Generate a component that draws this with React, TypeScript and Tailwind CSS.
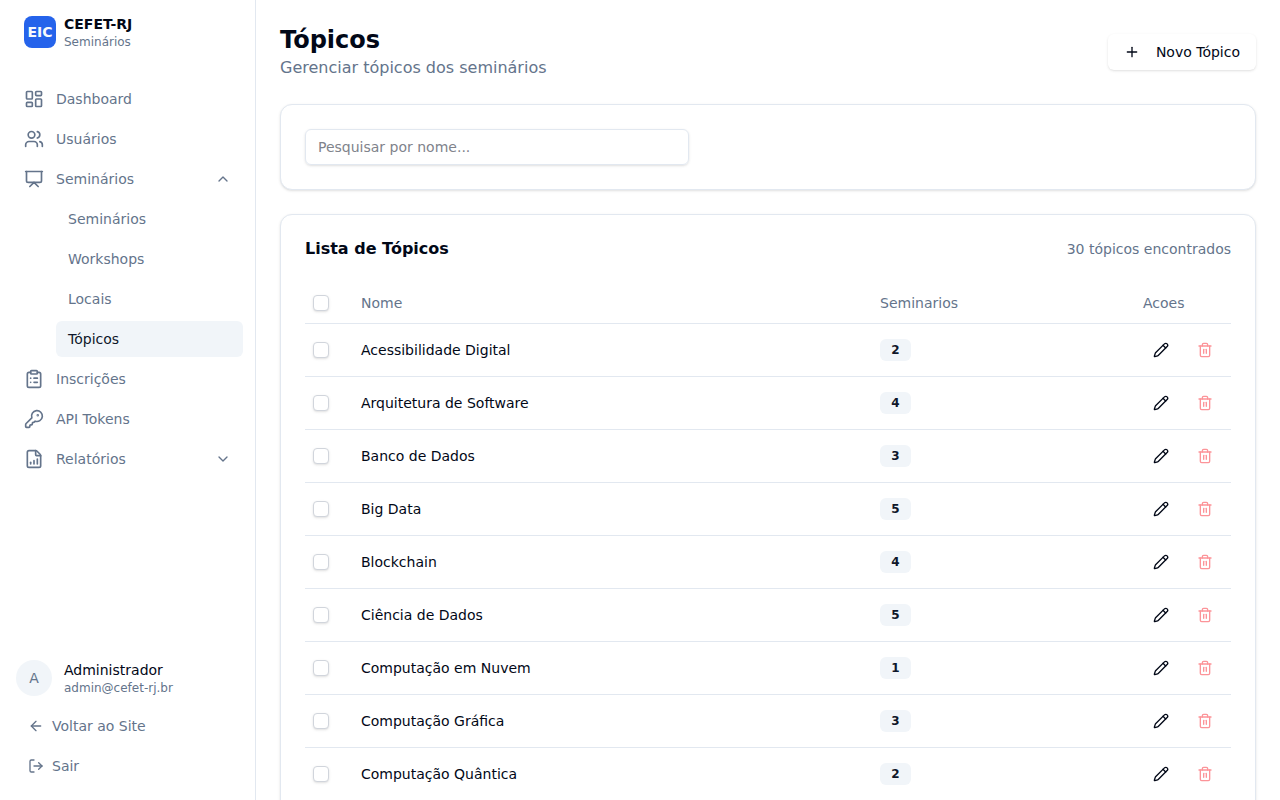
import {
  ArrowLeft,
  ChevronDown,
  ChevronUp,
  ClipboardList,
  FileChartColumnIncreasing,
  KeyRound,
  LayoutDashboard,
  LogOut,
  Pencil,
  Plus,
  Presentation,
  Trash2,
  Users,
  type LucideIcon,
} from 'lucide-react';
import { useState } from 'react';

const topics = [
  { name: 'Acessibilidade Digital', seminars: 2 },
  { name: 'Arquitetura de Software', seminars: 4 },
  { name: 'Banco de Dados', seminars: 3 },
  { name: 'Big Data', seminars: 5 },
  { name: 'Blockchain', seminars: 4 },
  { name: 'Ciência de Dados', seminars: 5 },
  { name: 'Computação em Nuvem', seminars: 1 },
  { name: 'Computação Gráfica', seminars: 3 },
  { name: 'Computação Quântica', seminars: 2 },
];

const seminarLinks = ['Seminários', 'Workshops', 'Locais', 'Tópicos'];

const navItem =
  'flex h-9 w-full items-center gap-3 rounded-md px-3 text-sm text-[#64748b] hover:bg-[#f1f5f9]';

function NavLink({ icon: Icon, label }: { icon: LucideIcon; label: string }) {
  return (
    <a href="#" className={navItem}>
      <Icon className="size-5" />
      {label}
    </a>
  );
}

function NavGroup({ icon: Icon, label, open }: { icon: LucideIcon; label: string; open: boolean }) {
  const Chevron = open ? ChevronUp : ChevronDown;
  return (
    <button type="button" aria-expanded={open} className={navItem}>
      <Icon className="size-5" />
      {label}
      <Chevron className="ml-auto size-4" />
    </button>
  );
}

function Sidebar() {
  return (
    <aside className="sticky top-0 flex h-screen w-64 shrink-0 flex-col border-r border-[#e2e8f0] bg-white">
      <div className="flex h-16 items-center gap-2 px-6">
        <div className="flex size-8 items-center justify-center rounded-lg bg-[#2563eb] text-sm font-bold text-[#f8fafc]">
          EIC
        </div>
        <div>
          <p className="text-sm font-bold">CEFET-RJ</p>
          <p className="text-xs text-[#64748b]">Seminários</p>
        </div>
      </div>

      <nav className="mt-px flex-1 space-y-1 px-3 py-4">
        <NavLink icon={LayoutDashboard} label="Dashboard" />
        <NavLink icon={Users} label="Usuários" />
        <NavGroup icon={Presentation} label="Seminários" open />
        <div className="ml-11 space-y-1">
          {seminarLinks.map((label) => (
            <a
              key={label}
              href="#"
              className={
                label === 'Tópicos'
                  ? 'flex h-9 items-center rounded-md bg-[#f1f5f9] px-3 text-sm text-[#0f172a]'
                  : 'flex h-9 items-center rounded-md px-3 text-sm text-[#64748b]'
              }
            >
              {label}
            </a>
          ))}
        </div>
        <NavLink icon={ClipboardList} label="Inscrições" />
        <NavLink icon={KeyRound} label="API Tokens" />
        <NavGroup icon={FileChartColumnIncreasing} label="Relatórios" open={false} />
      </nav>

      <div className="p-4">
        <div className="mb-3 flex items-center gap-3">
          <div className="flex size-9 items-center justify-center rounded-full bg-[#f1f5f9] text-sm text-[#64748b]">
            A
          </div>
          <div>
            <p className="text-sm">Administrador</p>
            <p className="text-xs text-[#64748b]">admin@cefet-rj.br</p>
          </div>
        </div>
        <div className="space-y-1 text-sm text-[#64748b]">
          <a href="#" className="flex h-9 items-center gap-2 rounded-md px-3">
            <ArrowLeft className="size-4" />
            Voltar ao Site
          </a>
          <button type="button" className="flex h-9 w-full items-center gap-2 rounded-md px-3">
            <LogOut className="size-4" />
            Sair
          </button>
        </div>
      </div>
    </aside>
  );
}

function Checkbox({ label }: { label: string }) {
  return (
    <input
      type="checkbox"
      aria-label={label}
      className="block size-4 appearance-none rounded-sm border border-gray-300 bg-white shadow-sm checked:bg-[#2563eb]"
    />
  );
}

function TopicsTable() {
  return (
    <table className="w-full table-fixed text-sm">
      <thead>
        <tr className="h-10 border-b border-[#e2e8f0] text-left text-[#64748b]">
          <th className="w-12 px-2">
            <Checkbox label="Selecionar todos" />
          </th>
          <th className="px-2 font-normal">Nome</th>
          <th className="w-[28.4%] px-2 font-normal">Seminarios</th>
          <th className="w-24 px-2 font-normal">Acoes</th>
        </tr>
      </thead>
      <tbody>
        {topics.map((topic) => (
          <tr key={topic.name} className="border-b border-[#e2e8f0]">
            <td className="p-2">
              <Checkbox label={`Selecionar ${topic.name}`} />
            </td>
            <td className="p-2">{topic.name}</td>
            <td className="p-2">
              <span className="inline-flex min-w-[31px] justify-center rounded-md border border-transparent bg-[#f1f5f9] px-2.5 py-0.5 text-xs font-semibold text-[#0f172a]">
                {topic.seminars}
              </span>
            </td>
            <td className="p-2">
              <div className="flex gap-2">
                <button
                  type="button"
                  aria-label={`Editar ${topic.name}`}
                  className="flex size-9 shrink-0 items-center justify-center rounded-md"
                >
                  <Pencil className="size-4" />
                </button>
                <button
                  type="button"
                  disabled
                  aria-label={`Excluir ${topic.name}`}
                  className="flex size-9 shrink-0 items-center justify-center rounded-md text-red-500 opacity-50"
                >
                  <Trash2 className="size-4" />
                </button>
              </div>
            </td>
          </tr>
        ))}
      </tbody>
    </table>
  );
}

export default function App() {
  const [search, setSearch] = useState('');

  return (
    <div className="flex min-h-screen bg-white font-['DejaVu_Sans',sans-serif] text-[#020817]">
      <Sidebar />
      <main className="min-w-0 flex-1 space-y-6 p-6">
        <div className="flex items-center justify-between">
          <div>
            <h1 className="text-2xl font-bold">Tópicos</h1>
            <p className="text-[#64748b]">Gerenciar tópicos dos seminários</p>
          </div>
          <button
            type="button"
            className="flex h-9 items-center gap-4 rounded-md px-4 text-sm shadow-sm"
          >
            <Plus className="size-4" />
            Novo Tópico
          </button>
        </div>

        <section className="rounded-xl border border-[#e2e8f0] bg-white p-6 shadow-sm">
          <input
            type="text"
            aria-label="Pesquisar por nome"
            placeholder="Pesquisar por nome..."
            value={search}
            onChange={(e) => setSearch(e.target.value)}
            className="block h-9 w-full max-w-sm rounded-md border border-[#e2e8f0] px-3 text-sm shadow-sm placeholder:text-[#80838b]"
          />
        </section>

        <section className="rounded-xl border border-[#e2e8f0] bg-white p-6 shadow-sm">
          <div className="mb-6 flex items-center justify-between">
            <h2 className="leading-none font-semibold">Lista de Tópicos</h2>
            <span className="text-sm text-[#64748b]">30 tópicos encontrados</span>
          </div>
          <TopicsTable />
        </section>
      </main>
    </div>
  );
}
